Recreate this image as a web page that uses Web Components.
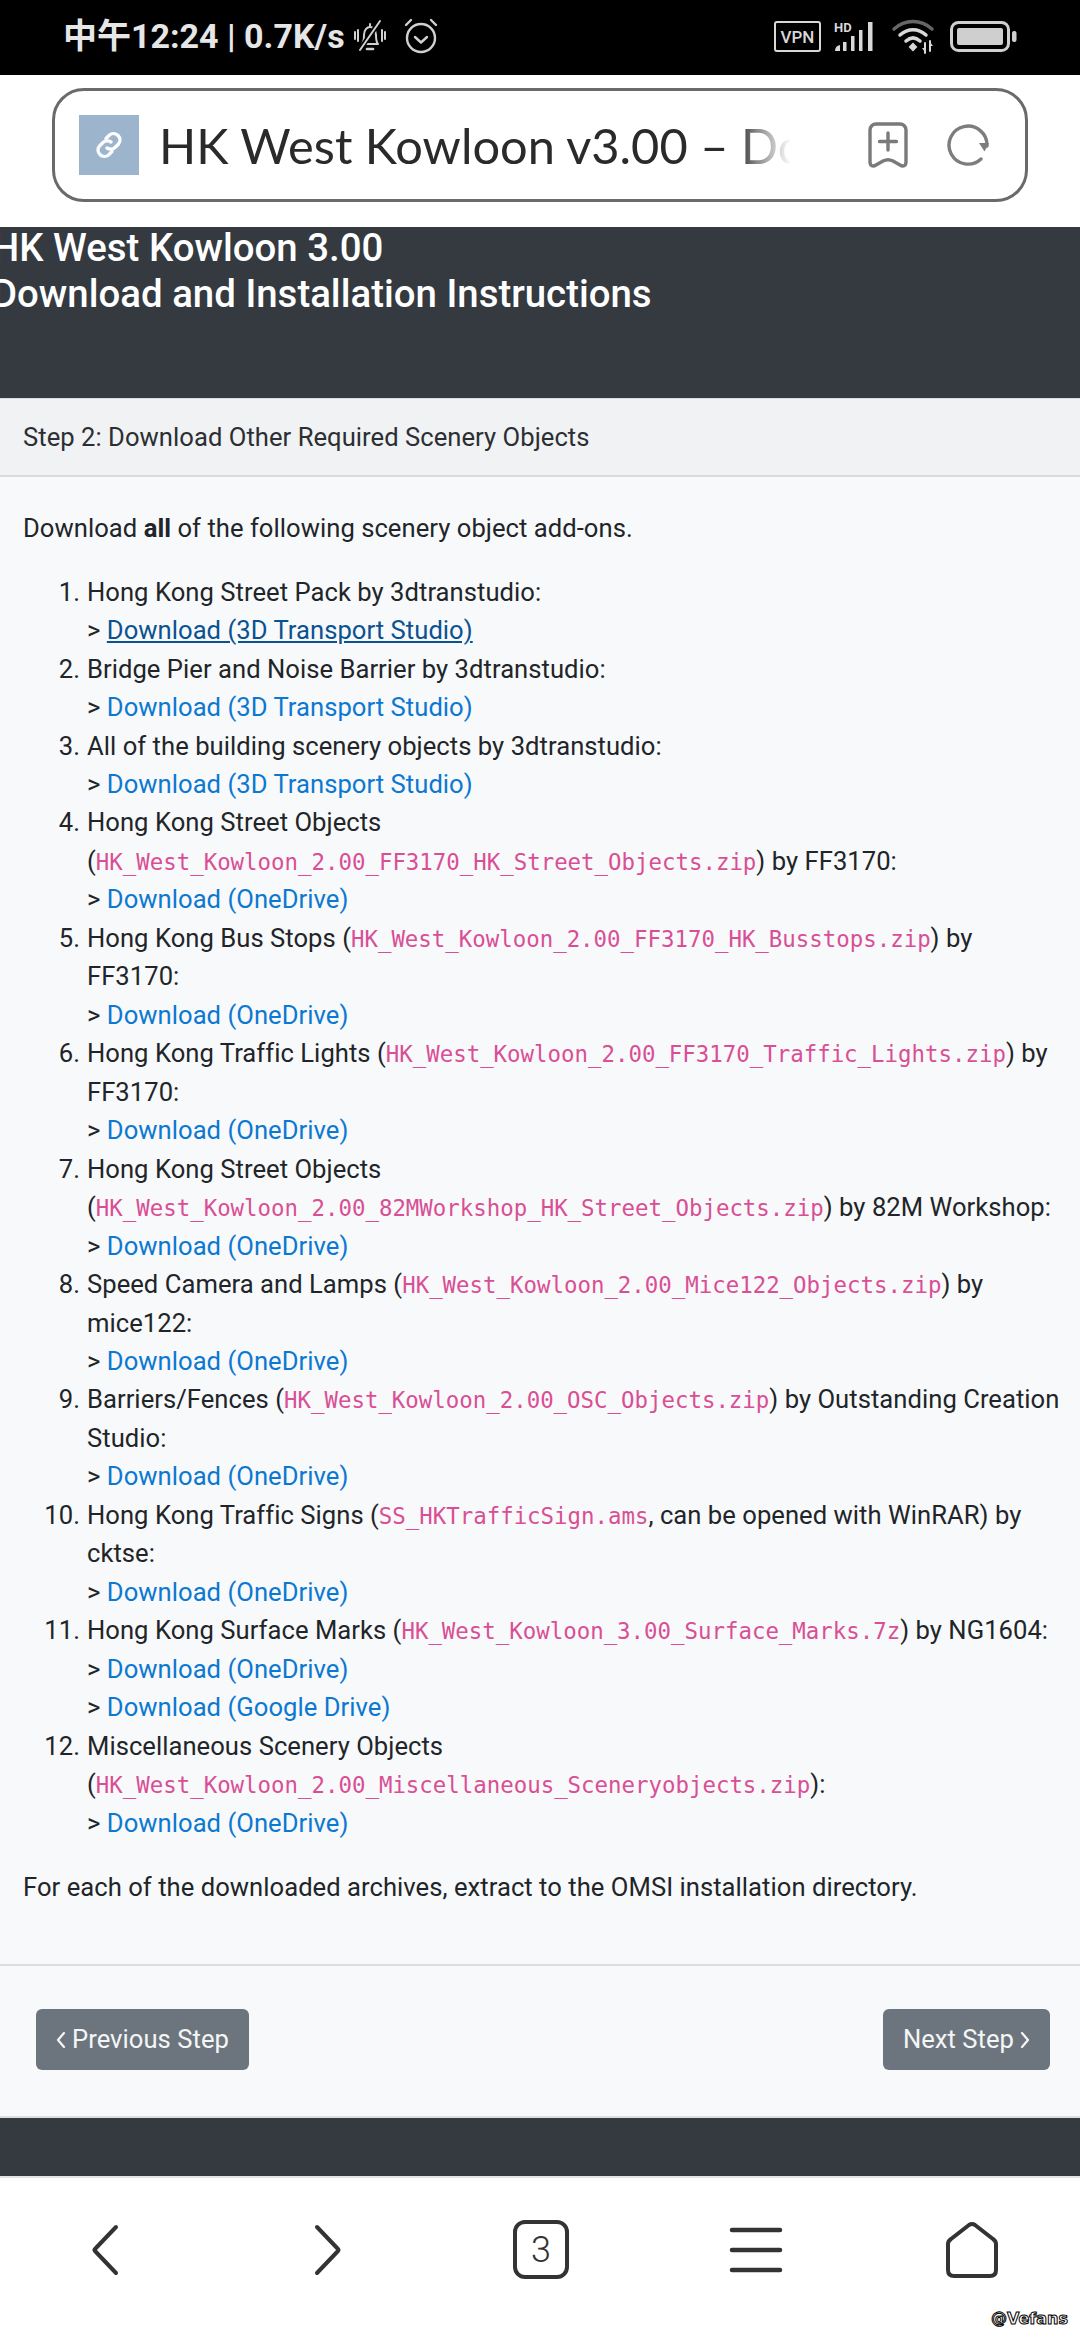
<!DOCTYPE html>
<html lang="en">
<head>
<meta charset="utf-8">
<title>HK West Kowloon v3.00</title>
<style>
  html, body { margin: 0; padding: 0; background: #fff; }
  body { width: 1080px; height: 2340px; overflow: hidden; font-family: Roboto, "Noto Sans CJK SC", sans-serif; }
</style>
</head>
<body>
<status-bar></status-bar>
<url-bar title-text="HK West Kowloon v3.00 – Download and Installation Instructions"></url-bar>
<page-header>HK West Kowloon 3.00<br>Download and Installation Instructions</page-header>
<step-card heading="Step 2: Download Other Required Scenery Objects">
  <p-text>Download <b>all</b> of the following scenery object add-ons.</p-text>
  <scenery-list>
    <scenery-item n="1">Hong Kong Street Pack by 3dtranstudio:<br>&gt; <dl-link active>Download (3D Transport Studio)</dl-link></scenery-item>
    <scenery-item n="2">Bridge Pier and Noise Barrier by 3dtranstudio:<br>&gt; <dl-link>Download (3D Transport Studio)</dl-link></scenery-item>
    <scenery-item n="3">All of the building scenery objects by 3dtranstudio:<br>&gt; <dl-link>Download (3D Transport Studio)</dl-link></scenery-item>
    <scenery-item n="4">Hong Kong Street Objects (<file-name>HK_West_Kowloon_2.00_FF3170_HK_Street_Objects.zip</file-name>) by FF3170:<br>&gt; <dl-link>Download (OneDrive)</dl-link></scenery-item>
    <scenery-item n="5">Hong Kong Bus Stops (<file-name>HK_West_Kowloon_2.00_FF3170_HK_Busstops.zip</file-name>) by FF3170:<br>&gt; <dl-link>Download (OneDrive)</dl-link></scenery-item>
    <scenery-item n="6">Hong Kong Traffic Lights (<file-name>HK_West_Kowloon_2.00_FF3170_Traffic_Lights.zip</file-name>) by FF3170:<br>&gt; <dl-link>Download (OneDrive)</dl-link></scenery-item>
    <scenery-item n="7">Hong Kong Street Objects (<file-name>HK_West_Kowloon_2.00_82MWorkshop_HK_Street_Objects.zip</file-name>) by 82M Workshop:<br>&gt; <dl-link>Download (OneDrive)</dl-link></scenery-item>
    <scenery-item n="8">Speed Camera and Lamps (<file-name>HK_West_Kowloon_2.00_Mice122_Objects.zip</file-name>) by mice122:<br>&gt; <dl-link>Download (OneDrive)</dl-link></scenery-item>
    <scenery-item n="9">Barriers/Fences (<file-name>HK_West_Kowloon_2.00_OSC_Objects.zip</file-name>) by Outstanding Creation Studio:<br>&gt; <dl-link>Download (OneDrive)</dl-link></scenery-item>
    <scenery-item n="10">Hong Kong Traffic Signs (<file-name>SS_HKTrafficSign.ams</file-name>, can be opened with WinRAR) by cktse:<br>&gt; <dl-link>Download (OneDrive)</dl-link></scenery-item>
    <scenery-item n="11">Hong Kong Surface Marks (<file-name>HK_West_Kowloon_3.00_Surface_Marks.7z</file-name>) by NG1604:<br>&gt; <dl-link>Download (OneDrive)</dl-link><br>&gt; <dl-link>Download (Google Drive)</dl-link></scenery-item>
    <scenery-item n="12">Miscellaneous Scenery Objects (<file-name>HK_West_Kowloon_2.00_Miscellaneous_Sceneryobjects.zip</file-name>):<br>&gt; <dl-link>Download (OneDrive)</dl-link></scenery-item>
  </scenery-list>
  <p-text>For each of the downloaded archives, extract to the OMSI installation directory.</p-text>
  <step-btn slot="prev" dir-to="prev">Previous Step</step-btn>
  <step-btn slot="next" dir-to="next">Next Step</step-btn>
</step-card>
<page-footer></page-footer>
<bottom-nav></bottom-nav>
<water-mark>@Vefans</water-mark>

<script>
class StatusBar extends HTMLElement {
  constructor() {
    super();
    this.attachShadow({ mode: "open" });
    this.shadowRoot.innerHTML = `
      <style>
        :host { display: flex; align-items: center; height: 75px; background: #000; color: #e6e6e6; box-sizing: border-box; padding: 0 0 0 63px; font-family: Roboto, "Noto Sans CJK SC", sans-serif; }
        .time { font-size: 34px; font-weight: 700; line-height: 75px; margin-top: -2px; white-space: nowrap; }
        .left { display: flex; align-items: center; gap: 16px; margin-left: 8px; margin-top: -3px; }
        .right { display: flex; align-items: center; margin-left: auto; margin-right: 63px; margin-top: -2px; }
        svg { display: block; }
      </style>
      <span class="time">中午12:24 | 0.7K/s</span>
      <div class="left">
        <svg width="34" height="34" viewBox="0 0 34 34" fill="none" stroke="#d0d0d0" stroke-width="2" stroke-linecap="round" stroke-linejoin="round">
          <path d="M9 25c2-2 2-5 2-9 0-5 3-8 6-8s6 3 6 8c0 4 0 7 2 9z"/>
          <path d="M14 30h6" stroke-width="2.600"/>
          <path d="M17 5v2M2 13v7M5 11v11M29 11v11M32 13v7"/>
          <path d="M27 2 6 32" stroke="#000" stroke-width="5"/>
          <path d="M27 2 7 31"/>
        </svg>
        <svg width="36" height="36" viewBox="0 0 36 36" fill="none" stroke="#d0d0d0" stroke-width="2.400" stroke-linecap="round" stroke-linejoin="round">
          <circle cx="18" cy="20" r="14"/>
          <path d="m12 19 6 5.500 6-5.500"/>
          <path d="M3 7 8 2M33 7l-5-5"/>
        </svg>
      </div>
      <div class="right">
        <svg width="47" height="31" viewBox="0 0 47 31">
          <rect x="1" y="1" width="45" height="29" rx="2" fill="none" stroke="#d8d8d8" stroke-width="2"/>
          <text x="23.500" y="22" text-anchor="middle" font-family="Roboto" font-weight="500" font-size="17" fill="#d8d8d8">VPN</text>
        </svg>
        <svg width="42" height="32" viewBox="0 0 42 32" style="margin-left:13px" fill="#d8d8d8">
          <text x="0" y="11" font-family="Roboto" font-weight="700" font-size="13" fill="#d8d8d8">HD</text>
          <path d="M1 30q0-5 5-6v6zM9 21h3.500v9H9zM17 15h3.500v15H17zM25 9h3.500v21H25zM34 1h4.500v29H34z"/>
        </svg>
        <svg width="46" height="36" viewBox="0 0 46 36" style="margin-left:15px" fill="none" stroke-linecap="round">
          <path d="M3 10C14 0 30 0 41 10" stroke="#666" stroke-width="3.500"/>
          <path d="M9 16c8-7 18-7 26 0" stroke="#d8d8d8" stroke-width="3.500"/>
          <path d="M15 22c4.500-4 9.500-4 14 0" stroke="#d8d8d8" stroke-width="3.500"/>
          <path d="m19 28 3-3 3 3-3 3z" fill="#d8d8d8" stroke="#d8d8d8" stroke-width="2"/>
          <path d="M34 24v10M39 22v10" stroke="#d8d8d8" stroke-width="2"/>
          <path d="m31 29 3 4 0-4zM42 27l-3-4v4z" fill="#d8d8d8"/>
        </svg>
        <svg width="67" height="31" viewBox="0 0 67 31" style="margin-left:13px">
          <rect x="1.500" y="1.500" width="57" height="28" rx="7" fill="none" stroke="#d0d0d0" stroke-width="3"/>
          <rect x="7" y="7" width="46" height="17" rx="2" fill="#cfcfcf"/>
          <rect x="62" y="10" width="4.500" height="11" rx="2" fill="#d0d0d0"/>
        </svg>
      </div>`;
  }
}

class UrlBar extends HTMLElement {
  constructor() {
    super();
    this.attachShadow({ mode: "open" });
    this.shadowRoot.innerHTML = `
      <style>
        :host { display: block; height: 152px; background: #fff; box-sizing: border-box; padding: 13px 52px 25px 52px; }
        .box { height: 114px; box-sizing: border-box; border: 3px solid #6a6a6a; border-radius: 32px; display: flex; align-items: center; padding-left: 24px; }
        .fav { width: 60px; height: 60px; background: #9cb5cd; display: flex; align-items: center; justify-content: center; flex: none; margin-top: -1px; }
        .title { width: 632px; flex: none; margin-left: 20px; font: 400 48.750px/60px Lato, "Noto Sans", sans-serif; color: #2a2a2a; white-space: nowrap; overflow: hidden;
          -webkit-mask-image: linear-gradient(90deg, #000 578px, rgba(0,0,0,.55) 598px, transparent 632px); mask-image: linear-gradient(90deg, #000 578px, rgba(0,0,0,.55) 598px, transparent 632px); }
        .acts { display: flex; align-items: center; margin-left: 77px; }
        svg { display: block; }
      </style>
      <div class="box">
        <span class="fav">
          <svg width="32" height="32" viewBox="0 0 32 32" fill="none" stroke="#fff" stroke-width="3.400" stroke-linecap="round">
            <path d="M13 9.500 16.500 6a6.400 6.400 0 0 1 9 9L22 18.500a6.400 6.400 0 0 1-8 .5"/>
            <path d="M19 22.500 15.500 26a6.400 6.400 0 0 1-9-9L10 13.500a6.400 6.400 0 0 1 8-.5" stroke-opacity=".95"/>
          </svg>
        </span>
        <span class="title"></span>
        <span class="acts">
          <svg width="40" height="46" viewBox="0 0 40 46" fill="none" stroke="#7a7a7a" stroke-width="3.400" stroke-linecap="round" stroke-linejoin="round">
            <path d="M2 8a6 6 0 0 1 6-6h24a6 6 0 0 1 6 6v32c0 4-3 5-6 3l-7-4c-3-1.600-7-1.600-10 0l-7 4c-3 2-6 1-6-3z"/>
            <path d="M20 11v17M11.500 19.500h17"/>
          </svg>
          <svg width="44" height="44" viewBox="0 0 44 44" style="margin-left:39px" fill="none" stroke="#7d7d7d" stroke-width="3.400" stroke-linecap="round">
            <path d="M40 23A19 19 0 1 0 34 36"/>
            <path d="M32 20h10l-4.500 8.500z" fill="#7d7d7d" stroke="none"/>
          </svg>
        </span>
      </div>`;
    this.shadowRoot.querySelector(".title").textContent = this.getAttribute("title-text");
  }
}

class PageHeader extends HTMLElement {
  constructor() {
    super();
    this.attachShadow({ mode: "open" });
    this.shadowRoot.innerHTML = `
      <style>
        :host { display: block; height: 171px; background: #343a40; color: #fff; overflow: hidden; font: 500 38.400px/46.080px Roboto, sans-serif; }
        .in { margin: -2px 0 0 -8px; }
      </style>
      <div class="in"><slot></slot></div>`;
  }
}

class StepCard extends HTMLElement {
  constructor() {
    super();
    this.attachShadow({ mode: "open" });
    this.shadowRoot.innerHTML = `
      <style>
        :host { display: block; background: #f8f9fa; color: #212529; font: 400 25.600px/38.400px Roboto, sans-serif; letter-spacing: .04px; border-top: 1px solid #dcdde0; }
        .head { height: 78px; box-sizing: border-box; background: #f1f2f4; border-bottom: 2px solid #dadbdd; padding: 19px 23px; color: #2b2f33; }
        .body { padding: 32px 14px 32px 23px; border-bottom: 2px solid #dcdde0; }
        .foot { height: 152px; box-sizing: border-box; display: flex; justify-content: space-between; align-items: center; padding: 0 30px 2px 36px; border-bottom: 2px solid #dcdde0; }
      </style>
      <div class="head"></div>
      <div class="body"><slot></slot></div>
      <div class="foot"><slot name="prev"></slot><slot name="next"></slot></div>`;
    this.shadowRoot.querySelector(".head").textContent = this.getAttribute("heading");
  }
}

class PText extends HTMLElement {
  constructor() {
    super();
    this.attachShadow({ mode: "open" });
    this.shadowRoot.innerHTML = `<style>:host { display: block; margin: 0 0 25.600px; }</style><slot></slot>`;
  }
}

class SceneryList extends HTMLElement {
  constructor() {
    super();
    this.attachShadow({ mode: "open" });
    this.shadowRoot.innerHTML = `<style>:host { display: block; margin: 1px 0 25.600px; }</style><slot></slot>`;
  }
}

class SceneryItem extends HTMLElement {
  constructor() {
    super();
    this.attachShadow({ mode: "open" });
    this.shadowRoot.innerHTML = `
      <style>
        :host { display: grid; grid-template-columns: 64px 1fr; }
        .n { text-align: right; padding-right: 7px; white-space: nowrap; }
      </style>
      <span class="n"></span>
      <div><slot></slot></div>`;
    this.shadowRoot.querySelector(".n").textContent = this.getAttribute("n") + ".";
  }
}

class DlLink extends HTMLElement {
  constructor() {
    super();
    this.attachShadow({ mode: "open" });
    // no whitespace round the slot: the host is inline
    this.shadowRoot.innerHTML = `<style>
        :host { display: inline; color: #0b78d1; }
        :host([active]) { color: #0a5291; text-decoration: underline; }
      </style><slot></slot>`;
  }
}

class FileName extends HTMLElement {
  constructor() {
    super();
    this.attachShadow({ mode: "open" });
    this.shadowRoot.innerHTML = `<style>
        :host { display: inline; color: #d84f96; font-family: "DejaVu Sans Mono", "Liberation Mono", monospace; font-size: 22.400px; line-height: 36.600px; letter-spacing: 0; }
      </style><slot></slot>`;
  }
}

class StepBtn extends HTMLElement {
  constructor() {
    super();
    this.attachShadow({ mode: "open" });
    const next = this.getAttribute("dir-to") === "next";
    const chevron = `<svg width="10" height="18" viewBox="0 0 10 18" fill="none" stroke="#f4f5f6" stroke-width="2.200" stroke-linecap="round" stroke-linejoin="round"><path d="${next ? "M2 2l6 7-6 7" : "M8 2 2 9l6 7"}"/></svg>`;
    this.shadowRoot.innerHTML = `
      <style>
        :host { display: flex; align-items: center; gap: 6px; height: 61px; box-sizing: border-box; padding: 0 20px 1px; background: #6c757d; color: #f4f5f6; border-radius: 6px; white-space: nowrap; }
        svg { display: block; flex: none; margin-top: 2px; }
      </style>
      ${next ? "" : chevron}<slot></slot>${next ? chevron : ""}`;
  }
}

class PageFooter extends HTMLElement {
  constructor() {
    super();
    this.attachShadow({ mode: "open" });
    this.shadowRoot.innerHTML = `<style>:host { display: block; height: 58px; background: #343a40; border-bottom: 2px solid #e4e4e4; }</style>`;
  }
}

class BottomNav extends HTMLElement {
  constructor() {
    super();
    this.attachShadow({ mode: "open" });
    this.shadowRoot.innerHTML = `
      <style>
        :host { display: grid; grid-template-columns: repeat(5, 216px); height: 163px; background: #fff; }
        .c { display: flex; justify-content: center; padding-top: 41px; }
        svg { display: block; overflow: visible; }
      </style>
      <div class="c"><svg width="60" height="60" viewBox="0 0 60 60" fill="none" stroke="#333" stroke-width="4" stroke-linecap="round" stroke-linejoin="round"><path d="M38 8 17 30q-1 1 0 2l21 22"/></svg></div>
      <div class="c"><svg width="60" height="60" viewBox="0 0 60 60" fill="none" stroke="#333" stroke-width="4" stroke-linecap="round" stroke-linejoin="round"><path d="M23 8l21 22q1 1 0 2L23 54"/></svg></div>
      <div class="c"><svg width="60" height="60" viewBox="0 0 60 60" fill="none" stroke="#333" stroke-width="4"><rect x="5" y="3" width="52" height="55" rx="10"/><text x="31" y="43" text-anchor="middle" font-family="Roboto" font-weight="300" font-size="36" fill="#333" stroke="none">3</text></svg></div>
      <div class="c"><svg width="60" height="60" viewBox="0 0 60 60" fill="none" stroke="#333" stroke-width="4.500" stroke-linecap="round"><path d="M6 11h48M6 31h48M6 51h48"/></svg></div>
      <div class="c"><svg width="60" height="60" viewBox="0 0 60 60" fill="none" stroke="#333" stroke-width="4" stroke-linejoin="round"><path d="M6 25q0-3 3-5L27 6q3-2 6 0l18 14q3 2 3 5v26q0 6-6 6H12q-6 0-6-6z"/></svg></div>`;
  }
}

class WaterMark extends HTMLElement {
  constructor() {
    super();
    this.attachShadow({ mode: "open" });
    this.shadowRoot.innerHTML = `
      <style>
        :host { position: absolute; left: 991px; top: 2308px; font: 700 16px/22px "DejaVu Sans", sans-serif; color: #fff; -webkit-text-stroke: 1px #000; }
      </style>
      <slot></slot>`;
  }
}

customElements.define("status-bar", StatusBar);
customElements.define("url-bar", UrlBar);
customElements.define("page-header", PageHeader);
customElements.define("step-card", StepCard);
customElements.define("p-text", PText);
customElements.define("scenery-list", SceneryList);
customElements.define("scenery-item", SceneryItem);
customElements.define("dl-link", DlLink);
customElements.define("file-name", FileName);
customElements.define("step-btn", StepBtn);
customElements.define("page-footer", PageFooter);
customElements.define("bottom-nav", BottomNav);
customElements.define("water-mark", WaterMark);
</script>
</body>
</html>
